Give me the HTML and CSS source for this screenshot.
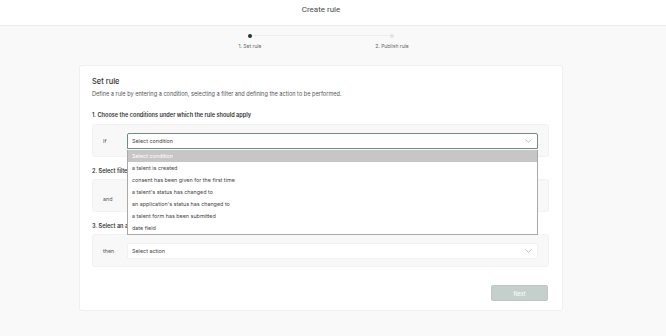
FILE: index.html
```html
<!DOCTYPE html>
<html>

<head>
    <meta charset="UTF-8">
    <title>Create rule</title>
    <link rel="stylesheet" href="styles.css">
</head>

<body>
    <div class="topBar">
        <div class="topTitle">Create rule</div>
    </div>

    <div class="page">
        <div class="steps">
            <span class="stepLine"></span>
            <span class="stepDot active"></span>
            <span class="stepDot last"></span>
            <span class="stepLabel">1. Set rule</span>
            <span class="stepLabel last">2. Publish rule</span>
        </div>

        <div class="card">
            <h2 class="cardTitle">Set rule</h2>
            <p class="cardDesc">Define a rule by entering a condition, selecting a filter and defining the action to be performed.</p>

            <h3 class="sectionTitle first">1. Choose the conditions under which the rule should apply</h3>
            <div class="panel">
                <span class="panelLabel">If</span>
                <div class="selectBox open">
                    <span>Select condition</span>
                    <svg class="chevron" width="7" height="4" viewBox="0 0 7 4"><path d="M0.5 0.5 L3.5 3.3 L6.5 0.5" fill="none" stroke="#9aa4b0" stroke-width="0.7"/></svg>
                    <!-- open list lies over sections 2 and 3 -->
                    <ul class="optionList">
                        <li class="selected">Select condition</li>
                        <li>a talent is created</li>
                        <li>consent has been given for the first time</li>
                        <li>a talent's status has changed to</li>
                        <li>an application's status has changed to</li>
                        <li>a talent form has been submitted</li>
                        <li>date field</li>
                    </ul>
                </div>
            </div>

            <h3 class="sectionTitle">2. Select filter</h3>
            <div class="panel short">
                <span class="panelLabel">and</span>
            </div>

            <h3 class="sectionTitle">3. Select an action</h3>
            <div class="panel">
                <span class="panelLabel">then</span>
                <div class="selectBox plain">
                    <span>Select action</span>
                    <svg class="chevron" width="7" height="4" viewBox="0 0 7 4"><path d="M0.5 0.5 L3.5 3.3 L6.5 0.5" fill="none" stroke="#9aa4b0" stroke-width="0.7"/></svg>
                </div>
            </div>

            <div class="cardFoot">
                <a href="javascript:;" class="btnNext">Next</a>
            </div>
        </div>
    </div>
</body>

</html>
```

FILE: styles.css
```css
* {
    margin: 0;
    padding: 0;
    list-style: none;
    text-decoration: none;
    box-sizing: border-box;
}

body {
    background-color: #f9f9f9;
    font-family: Inter, "Liberation Sans", sans-serif;
    color: #444;
}

.topBar {
    height: 26px;
    background-color: #fff;
    border-bottom: solid 1px #ececec;
    padding-right: 24px;
}

.topTitle {
    text-align: center;
    font-family: Roboto, "Liberation Sans", sans-serif;
    font-size: 8px;
    line-height: 11px;
    padding-top: 4px;
    color: #4a4a4a;
}

.page {
    width: 642px;
}

/* stepper */
.steps {
    display: grid;
    grid-template-columns: 60px 82px 60px;
    grid-template-rows: 7px 14px;
    width: 202px;
    margin: 6px auto 0;
    align-items: center;
    justify-items: center;
}

.stepLine {
    grid-column: 1 / 4;
    grid-row: 1;
    justify-self: stretch;
    height: 1px;
    margin: 0 30px;
    background-color: #ececec;
}

.stepDot {
    grid-column: 1;
    grid-row: 1;
    width: 4px;
    height: 4px;
    border-radius: 50%;
    background-color: #e3e3e3;
}

.stepDot.active {
    background-color: #1e3a33;
}

.stepDot.last {
    grid-column: 3;
}

.stepLabel {
    grid-column: 1;
    grid-row: 2;
    font-size: 5px;
    color: #666;
    white-space: nowrap;
}

.stepLabel.last {
    grid-column: 3;
}

/* card */
.card {
    width: 484px;
    margin: 12px 0 0 79px;
    background-color: #fff;
    border: solid 1px #efefef;
    border-radius: 3px;
    padding: 11px 13px 9px 12px;
}

.cardTitle {
    font-size: 7.5px;
    line-height: 10px;
    font-weight: 500;
    color: #333;
}

.cardDesc {
    margin-top: 3px;
    font-size: 5.6px;
    line-height: 8px;
    color: #555;
}

.sectionTitle {
    margin: 10px 0 4px;
    font-size: 5.6px;
    line-height: 8px;
    font-weight: 600;
    color: #333;
    white-space: nowrap;
}

.sectionTitle.first {
    margin: 13px 0 5px;
}

.panel {
    display: flex;
    align-items: center;
    height: 33px;
    padding: 0 10px 0 10px;
    background-color: #f8f8f8;
    border: solid 1px #f2f2f2;
    border-radius: 3px;
}

.panel.short {
    align-items: flex-end;
    padding-bottom: 9px;
}

.panelLabel {
    width: 24px;
    font-size: 5.4px;
    color: #555;
}

.selectBox {
    position: relative;
    flex: 1;
    display: flex;
    align-items: center;
    justify-content: space-between;
    height: 16px;
    padding: 0 5px 0 4px;
    background-color: #fff;
    border-radius: 2px;
    font-size: 5.4px;
    color: #444;
}

.selectBox.open {
    border: solid 1px #6f8d82;
    border-radius: 2px 2px 0 0;
}

.selectBox.plain {
    border: solid 1px #f1f1f1;
}

.optionList {
    position: absolute;
    left: -1px;
    right: -1px;
    top: 16px;
    z-index: 5;
    background-color: #fff;
    border: solid 1px #a9a9a9;
    border-top: none;
}

.optionList li {
    height: 12px;
    line-height: 12px;
    padding-left: 4px;
    font-size: 5.4px;
    color: #444;
}

.optionList .selected {
    background-color: #c6c6c6;
    color: #fff;
}

.cardFoot {
    display: flex;
    justify-content: flex-end;
    margin-top: 18px;
    padding-right: 1px;
}

.btnNext {
    display: block;
    width: 57px;
    height: 16px;
    line-height: 16px;
    text-align: center;
    font-size: 5.5px;
    color: #fff;
    background-color: #c5d0cc;
    border: solid 1px #bcc8c3;
    border-radius: 2px;
}
```
